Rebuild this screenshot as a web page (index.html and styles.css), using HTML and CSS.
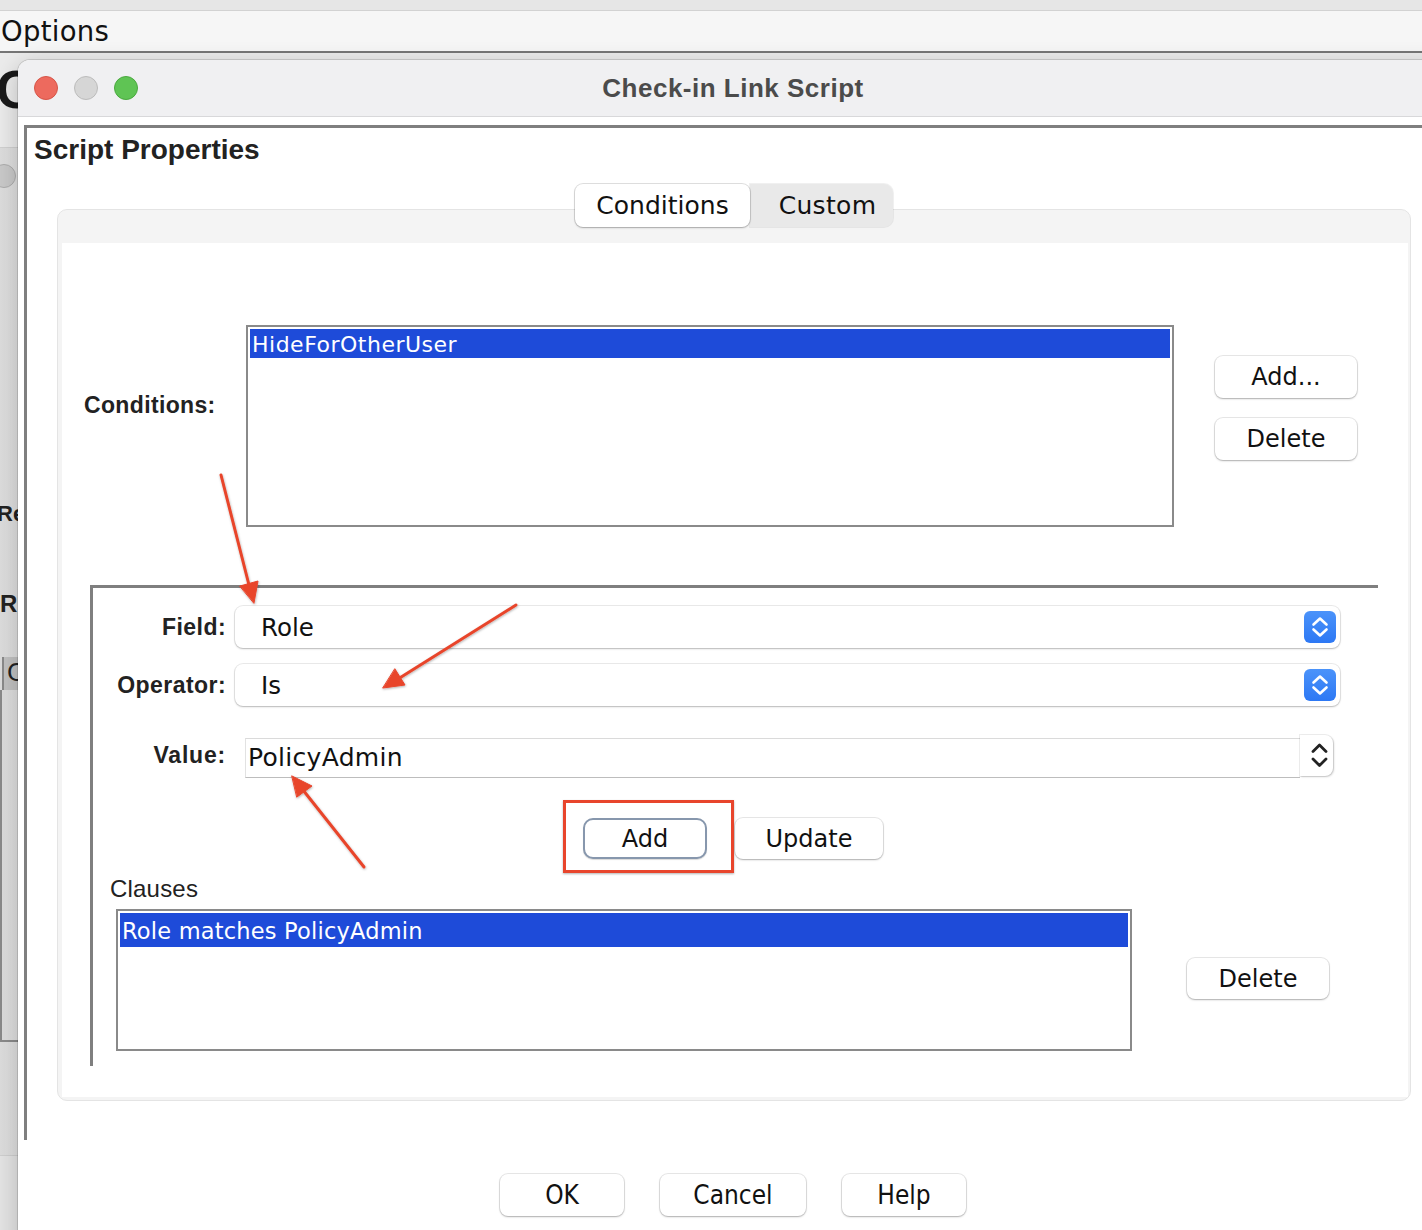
FILE: index.html
```html
<!DOCTYPE html>
<html>
<head>
<meta charset="utf-8">
<title>Check-in Link Script</title>
<link rel="stylesheet" href="styles.css">
</head>
<body>
<div class="desktop">
  <div class="bg-topstrip"></div>
  <div class="bg-options">Options</div>

  <div class="backwin">
    <div class="bw-bigc">C</div>
    <div class="bw-inner">
      <div class="bw-light"></div>
      <div class="bw-re">Re</div>
      <div class="bw-r">R</div>
      <div class="bw-tab">C</div>
      <div class="bw-box"></div>
    </div>
    <div class="bw-bottom"></div>
  </div>

  <div class="dialog">
    <div class="titlebar">
      <div class="lights">
        <span class="light red"></span>
        <span class="light gray"></span>
        <span class="light green"></span>
      </div>
      <div class="title">Check-in Link Script</div>
      <div></div>
    </div>

    <div class="frame">
      <div class="frame-title">Script Properties</div>

      <div class="tabbox">
        <div class="tabs">
          <div class="tab tab-active">Conditions</div>
          <div class="tab tab-custom">Custom</div>
        </div>
        <div class="panel">
          <div class="panel-body">
            <div class="cond-row">
              <div class="cond-label">Conditions:</div>
              <div class="listbox cond-list">
                <div class="list-item sel">HideForOtherUser</div>
              </div>
              <div class="btn-col">
                <div class="btn btn-side">Add...</div>
                <div class="btn btn-side">Delete</div>
              </div>
            </div>

            <div class="group">
              <div class="form-row">
                <div class="flabel">Field:</div>
                <div class="select">
                  <span class="select-text">Role</span>
                  <span class="stepper">
                    <svg width="32" height="32" viewBox="0 0 32 32"><path d="M9.5 13.5 L16 7.5 L22.5 13.5 M9.5 18.5 L16 24.5 L22.5 18.5" fill="none" stroke="#fff" stroke-width="2.6" stroke-linecap="round" stroke-linejoin="round"/></svg>
                  </span>
                </div>
              </div>
              <div class="form-row row-op">
                <div class="flabel">Operator:</div>
                <div class="select">
                  <span class="select-text">Is</span>
                  <span class="stepper">
                    <svg width="32" height="32" viewBox="0 0 32 32"><path d="M9.5 13.5 L16 7.5 L22.5 13.5 M9.5 18.5 L16 24.5 L22.5 18.5" fill="none" stroke="#fff" stroke-width="2.6" stroke-linecap="round" stroke-linejoin="round"/></svg>
                  </span>
                </div>
              </div>
              <div class="form-row row-val">
                <div class="flabel flabel-val">Value:</div>
                <div class="combo">
                  <div class="combo-field">PolicyAdmin</div>
                  <div class="combo-arrow">
                    <svg width="33" height="41" viewBox="0 0 33 41"><path d="M13 16.5 L19.5 10 L26 16.5 M13 24 L19.5 30.5 L26 24" fill="none" stroke="#222" stroke-width="2.8" stroke-linecap="round" stroke-linejoin="round"/></svg>
                  </div>
                </div>
              </div>
              <div class="action-row">
                <div class="btn btn-default">Add</div>
                <div class="btn btn-update">Update</div>
              </div>
              <div class="clauses-label">Clauses</div>
              <div class="clauses-row">
                <div class="listbox clause-list">
                  <div class="list-item sel sel-clause">Role matches PolicyAdmin</div>
                </div>
                <div class="btn btn-side btn-cdel">Delete</div>
              </div>
            </div>
          </div>
        </div>
      </div>
    </div>

    <div class="footer">
      <div class="btn btn-foot btn-ok">OK</div>
      <div class="btn btn-foot btn-cancel">Cancel</div>
      <div class="btn btn-foot btn-ok">Help</div>
    </div>
  </div>

  <div class="annot-box"></div>
  <svg class="annot" width="1422" height="1230" viewBox="0 0 1422 1230">
    <defs>
      <filter id="sh" x="-20%" y="-20%" width="140%" height="140%">
        <feDropShadow dx="0.5" dy="1" stdDeviation="1" flood-color="#000" flood-opacity="0.3"/>
      </filter>
    </defs>
    <g filter="url(#sh)" fill="#e8452c" stroke="#e8452c" stroke-linecap="round">
      <line x1="221" y1="475" x2="249" y2="585" stroke-width="3"/>
      <polygon points="254,603 258,581 240,586" stroke-width="1"/>
      <line x1="516" y1="605" x2="398" y2="679" stroke-width="3"/>
      <polygon points="383,688 405,685 395,669" stroke-width="1"/>
      <line x1="364" y1="867" x2="303" y2="790" stroke-width="3"/>
      <polygon points="292,776 312,786 297,797" stroke-width="1"/>
    </g>
  </svg>
</div>
</body>
</html>
```

FILE: styles.css
```css
html, body {
  margin: 0;
  padding: 0;
  overflow: hidden;
}
body {
  width: 1422px;
  height: 1230px;
  background: #ebebeb;
  font-family: "DejaVu Sans", sans-serif;
}
.desktop {
  position: relative;
  width: 1422px;
  height: 1230px;
  overflow: hidden;
  background: #ebebeb;
}

/* backdrop */
.bg-topstrip {
  height: 10px;
  background: #e6e6e6;
  border-bottom: 1px solid #d2d2d2;
}
.bg-options {
  height: 40px;
  line-height: 40px;
  background: #f6f6f6;
  border-bottom: 2px solid #767676;
  font-family: "DejaVu Sans", sans-serif;
  font-size: 27.5px;
  letter-spacing: 0.3px;
  color: #111;
  padding-left: 1px;
}
.backwin {
  position: absolute;
  left: 0;
  top: 53px;
  width: 40px;
  height: 1177px;
}
.bw-bigc {
  position: absolute;
  left: -4px;
  top: 6px;
  font-family: "Liberation Sans", sans-serif;
  font-weight: bold;
  font-size: 54px;
  line-height: 60px;
  color: #1a1a1a;
}
.bw-inner {
  position: absolute;
  left: 0;
  top: 94px;
  width: 40px;
  height: 1008px;
  background: linear-gradient(to right, #dcdcdc, #e2e2e2 60%, #cfcfcf);
  border-top: 1px solid #d0d0d0;
}
.bw-light {
  position: absolute;
  left: -8px;
  top: 16px;
  width: 22px;
  height: 22px;
  border-radius: 50%;
  background: #c9c9c9;
  border: 1px solid #adadad;
}
.bw-re, .bw-r {
  position: absolute;
  left: 0;
  font-family: "Liberation Sans", sans-serif;
  font-weight: bold;
  font-size: 24px;
  line-height: 28px;
  color: #222;
}
.bw-re { top: 352px; left: -3px; font-size: 22px; }
.bw-r { top: 442px; }
.bw-tab {
  position: absolute;
  left: 2px;
  top: 509px;
  width: 30px;
  height: 33px;
  background: #c2c2c2;
  border-left: 2px solid #8a8a8a;
  font-size: 24px;
  line-height: 33px;
  padding-left: 3px;
  color: #222;
}
.bw-box {
  position: absolute;
  left: 0;
  top: 542px;
  width: 40px;
  height: 350px;
  border-left: 2px solid #8a8a8a;
  border-bottom: 2px solid #8a8a8a;
}
.bw-bottom {
  position: absolute;
  left: 0;
  top: 1102px;
  width: 40px;
  height: 80px;
  background: #e4e4e4;
  border-top: 1px solid #cfcfcf;
}

/* dialog window */
.dialog {
  position: absolute;
  left: 18px;
  top: 60px;
  width: 1430px;
  height: 1190px;
  background: #ffffff;
  border-radius: 12px 12px 0 0;
  box-shadow: 0 0 0 1px rgba(0,0,0,0.13), 0 6px 24px rgba(0,0,0,0.22);
  overflow: hidden;
}
.titlebar {
  height: 56px;
  background: #f0f0f2;
  border-bottom: 1px solid #d8d8da;
  display: grid;
  grid-template-columns: 1fr auto 1fr;
  align-items: center;
}
.lights {
  display: flex;
  gap: 16px;
  padding-left: 16px;
}
.light {
  width: 22px;
  height: 22px;
  border-radius: 50%;
  display: block;
}
.light.red { background: #ed6a5e; border: 1px solid #d65548; }
.light.gray { background: #d6d6d6; border: 1px solid #bcbcbc; }
.light.green { background: #5fc454; border: 1px solid #4aa93f; }
.title {
  font-family: "Liberation Sans", sans-serif;
  font-weight: bold;
  font-size: 26px;
  letter-spacing: 0.5px;
  color: #4b4b4b;
  padding-top: 1px;
}

.frame {
  margin: 8px 4px 0 6px;
  height: 1015px;
  box-sizing: border-box;
  border-top: 3px solid #7f7f7f;
  border-left: 3px solid #7f7f7f;
  padding-top: 7px;
}
.frame-title {
  margin-left: 7px;
  font-family: "Liberation Sans", sans-serif;
  font-weight: bold;
  font-size: 28px;
  line-height: 30px;
  color: #222;
}

.tabbox {
  margin: 19px 33px 0 30px;
}
.tabs {
  position: relative;
  z-index: 1;
  display: flex;
  justify-content: center;
}
.tab {
  height: 43px;
  box-sizing: border-box;
  display: flex;
  align-items: center;
  justify-content: center;
  font-family: "DejaVu Sans", sans-serif;
  font-size: 25px;
  color: #111;
}
.tab-active {
  width: 175px;
  background: #ffffff;
  border-radius: 8px;
  box-shadow: 0 0 0 1px rgba(0,0,0,0.12), 0 1px 2px rgba(0,0,0,0.22);
  position: relative;
  z-index: 1;
}
.tab-custom {
  width: 143px;
  background: #e9e9e9;
  border-radius: 0 9px 9px 0;
  box-shadow: 0 0 0 1px rgba(0,0,0,0.06);
  padding-left: 12px;
  letter-spacing: 0.3px;
}
.panel {
  margin-top: -18px;
  background: #f4f4f4;
  border: 1px solid #e4e4e4;
  border-radius: 10px;
  padding: 33px 2px 3px 4px;
}
.panel-body {
  background: #ffffff;
  height: 854px;
  padding-top: 82px;
  box-sizing: border-box;
}

/* conditions */
.cond-row {
  display: flex;
  align-items: flex-start;
  padding-left: 22px;
}
.cond-label {
  width: 162px;
  margin-top: 66px;
  font-family: "Liberation Sans", sans-serif;
  font-weight: bold;
  font-size: 23px;
  letter-spacing: 0.35px;
  line-height: 28px;
  color: #222;
}
.listbox {
  box-sizing: border-box;
  border: 2px solid #8a8a8a;
  background: #fff;
  padding: 2px;
}
.cond-list {
  width: 928px;
  height: 202px;
}
.list-item {
  font-family: "DejaVu Sans", sans-serif;
  font-size: 22px;
  color: #fff;
  padding-left: 2px;
}
.list-item.sel {
  background: #1e4bd9;
  height: 29px;
  line-height: 31px;
  letter-spacing: 0.5px;
}
.list-item.sel-clause {
  height: 34px;
  line-height: 36px;
  font-size: 22.5px;
  letter-spacing: 0.2px;
}
.btn-col {
  display: flex;
  flex-direction: column;
  gap: 20px;
  margin-left: 41px;
  margin-top: 31px;
}
.btn {
  box-sizing: border-box;
  display: flex;
  align-items: center;
  justify-content: center;
  background: #fff;
  border-radius: 8px;
  box-shadow: 0 0 0 1px rgba(0,0,0,0.09), 0 1px 2px rgba(0,0,0,0.25);
  font-family: "DejaVu Sans", sans-serif;
  font-size: 24px;
  color: #111;
}
.btn-side {
  width: 142px;
  height: 42px;
}

/* group */
.group {
  margin-top: 58px;
  margin-left: 28px;
  width: 1288px;
  box-sizing: border-box;
  border-top: 3px solid #7f7f7f;
  border-left: 3px solid #7f7f7f;
  padding: 18px 0 15px 0;
}
.form-row {
  display: flex;
  align-items: center;
}
.row-op { margin-top: 16px; }
.row-val {
  margin-top: 29px;
  align-items: flex-start;
}
.flabel {
  width: 133px;
  text-align: right;
  font-family: "Liberation Sans", sans-serif;
  font-weight: bold;
  font-size: 23px;
  letter-spacing: 0.45px;
  line-height: 28px;
  color: #222;
  margin-right: 9px;
}
.flabel-val {
  line-height: 40px;
  letter-spacing: 0.8px;
}
.select {
  width: 1105px;
  height: 42px;
  box-sizing: border-box;
  background: #fff;
  border-radius: 8px;
  box-shadow: 0 0 0 1px rgba(0,0,0,0.08), 0 1px 2px rgba(0,0,0,0.22);
  display: flex;
  align-items: center;
  justify-content: space-between;
  padding: 0 4px 0 26px;
}
.select-text {
  font-family: "DejaVu Sans", sans-serif;
  font-size: 24.5px;
  color: #111;
}
.stepper {
  width: 32px;
  height: 32px;
  border-radius: 6px;
  background: linear-gradient(to bottom, #4b93fa, #2d78f4);
  display: block;
}
.stepper svg { display: block; }
.combo {
  margin-left: 10px;
  display: flex;
  align-items: flex-start;
}
.combo-field {
  margin-top: 3px;
  width: 1055px;
  height: 40px;
  box-sizing: border-box;
  border-top: 1px solid #dadada;
  border-left: 1px solid #e2e2e2;
  border-bottom: 1px solid #bdbdbd;
  font-family: "DejaVu Sans", sans-serif;
  font-size: 25px;
  letter-spacing: 0.3px;
  line-height: 38px;
  color: #111;
  padding-left: 2px;
}
.combo-arrow {
  width: 33px;
  height: 41px;
  background: #fff;
  border-radius: 0 8px 8px 0;
  box-shadow: 0 0 0 1px rgba(0,0,0,0.07), 1px 1px 2px rgba(0,0,0,0.18);
}
.combo-arrow svg { display: block; }

.action-row {
  display: flex;
  justify-content: center;
  gap: 28px;
  margin-top: 40px;
  padding-right: 5px;
}
.btn-default {
  width: 124px;
  height: 41px;
  border: 2px solid #8797ad;
  border-radius: 10px;
  box-shadow: 0 1px 1px rgba(0,0,0,0.15);
}
.btn-update {
  width: 148px;
  height: 41px;
}
.clauses-label {
  margin-top: 17px;
  padding-left: 17px;
  font-family: "Liberation Sans", sans-serif;
  font-size: 24px;
  letter-spacing: 0.2px;
  line-height: 26px;
  color: #222;
}
.clauses-row {
  display: flex;
  align-items: flex-start;
  margin-top: 7px;
  padding-left: 23px;
}
.clause-list {
  width: 1016px;
  height: 142px;
}
.btn-cdel {
  margin-left: 55px;
  margin-top: 49px;
  height: 41px;
}

/* footer */
.footer {
  margin-top: 34px;
  display: flex;
  justify-content: center;
  gap: 36px;
}
.btn-foot {
  height: 42px;
  font-family: "DejaVu Sans Condensed", "DejaVu Sans", sans-serif;
  font-stretch: condensed;
  font-size: 26px;
}
.btn-ok { width: 124px; }
.btn-cancel { width: 146px; }

/* annotations */
.annot-box {
  position: absolute;
  left: 563px;
  top: 800px;
  width: 171px;
  height: 73px;
  box-sizing: border-box;
  border: 3px solid #e8452c;
  box-shadow: 0 1px 2px rgba(0,0,0,0.3);
}
.annot {
  position: absolute;
  left: 0;
  top: 0;
  pointer-events: none;
}
```
